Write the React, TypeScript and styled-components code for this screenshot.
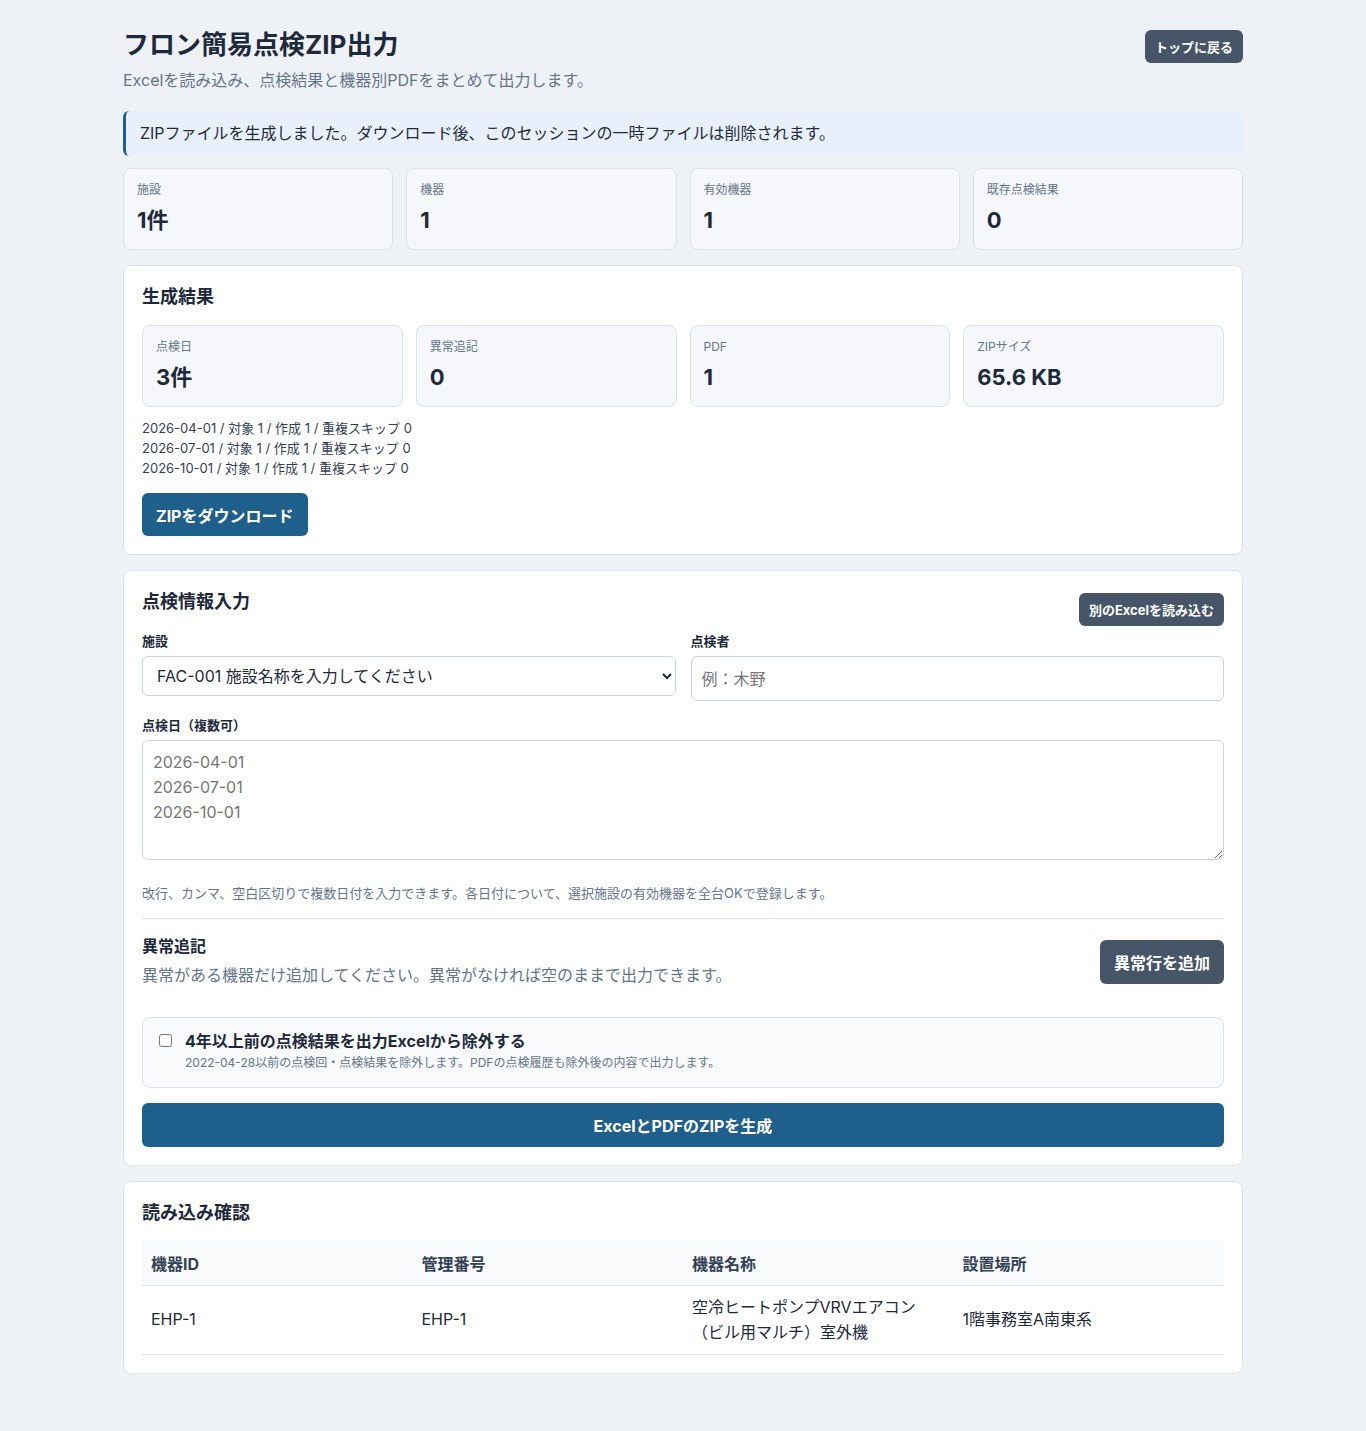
import React from "react";
import styled, { createGlobalStyle } from "styled-components";

const GlobalStyle = createGlobalStyle`
  html, body {
    margin: 0;
    padding: 0;
    background: #eef2f7;
  }
  body {
    font-family: "Inter", "Noto Sans CJK JP", sans-serif;
    color: #1e293b;
  }
  * {
    box-sizing: border-box;
  }
`;

const summary = [
  { label: "施設", value: "1件" },
  { label: "機器", value: "1" },
  { label: "有効機器", value: "1" },
  { label: "既存点検結果", value: "0" },
];

const results = [
  { label: "点検日", value: "3件" },
  { label: "異常追記", value: "0" },
  { label: "PDF", value: "1" },
  { label: "ZIPサイズ", value: "65.6 KB" },
];

const dateLogs = [
  "2026-04-01 / 対象 1 / 作成 1 / 重複スキップ 0",
  "2026-07-01 / 対象 1 / 作成 1 / 重複スキップ 0",
  "2026-10-01 / 対象 1 / 作成 1 / 重複スキップ 0",
];

const App = () => (
  <>
    <GlobalStyle />
    <Page>
      <Header>
        <div>
          <Title>フロン簡易点検ZIP出力</Title>
          <Subtitle>Excelを読み込み、点検結果と機器別PDFをまとめて出力します。</Subtitle>
        </div>
        <SmallButton>トップに戻る</SmallButton>
      </Header>

      <Notice>ZIPファイルを生成しました。ダウンロード後、このセッションの一時ファイルは削除されます。</Notice>

      <StatGrid>
        {summary.map((s) => (
          <StatCard key={s.label}>
            <StatLabel>{s.label}</StatLabel>
            <StatValue>{s.value}</StatValue>
          </StatCard>
        ))}
      </StatGrid>

      <Panel>
        <PanelTitle>生成結果</PanelTitle>
        <StatGrid>
          {results.map((s) => (
            <StatCard key={s.label}>
              <StatLabel>{s.label}</StatLabel>
              <StatValue>{s.value}</StatValue>
            </StatCard>
          ))}
        </StatGrid>
        <LogList>
          {dateLogs.map((l) => (
            <div key={l}>{l}</div>
          ))}
        </LogList>
        <PrimaryButton>ZIPをダウンロード</PrimaryButton>
      </Panel>

      <Panel>
        <PanelHead>
          <PanelTitle>点検情報入力</PanelTitle>
          <SmallButton>別のExcelを読み込む</SmallButton>
        </PanelHead>
        <FieldRow>
          <Field>
            <FieldLabel>施設</FieldLabel>
            <Select defaultValue="FAC-001">
              <option value="FAC-001">FAC-001 施設名称を入力してください</option>
            </Select>
          </Field>
          <Field>
            <FieldLabel>点検者</FieldLabel>
            <TextInput placeholder="例：木野" />
          </Field>
        </FieldRow>
        <Field>
          <FieldLabel>点検日（複数可）</FieldLabel>
          <TextArea placeholder={"2026-04-01\n2026-07-01\n2026-10-01"} />
        </Field>
        <Hint>改行、カンマ、空白区切りで複数日付を入力できます。各日付について、選択施設の有効機器を全台OKで登録します。</Hint>
        <Divider />
        <AnomalyHead>
          <div>
            <SectionTitle>異常追記</SectionTitle>
            <SectionNote>異常がある機器だけ追加してください。異常がなければ空のままで出力できます。</SectionNote>
          </div>
          <GrayButton>異常行を追加</GrayButton>
        </AnomalyHead>
        <CheckBox>
          <input type="checkbox" />
          <div>
            <CheckTitle>4年以上前の点検結果を出力Excelから除外する</CheckTitle>
            <CheckNote>2022-04-28以前の点検回・点検結果を除外します。PDFの点検履歴も除外後の内容で出力します。</CheckNote>
          </div>
        </CheckBox>
        <WideButton>ExcelとPDFのZIPを生成</WideButton>
      </Panel>

      <Panel>
        <PanelTitle>読み込み確認</PanelTitle>
        <Table>
          <thead>
            <tr>
              <Th>機器ID</Th>
              <Th>管理番号</Th>
              <Th>機器名称</Th>
              <Th>設置場所</Th>
            </tr>
          </thead>
          <tbody>
            <tr>
              <Td>EHP-1</Td>
              <Td>EHP-1</Td>
              <Td>
                空冷ヒートポンプVRVエアコン
                <br />
                （ビル用マルチ）室外機
              </Td>
              <Td>1階事務室A南東系</Td>
            </tr>
          </tbody>
        </Table>
      </Panel>
    </Page>
  </>
);

export default App;

const Page = styled.div`
  width: 1120px;
  margin: 0 auto;
  padding: 28px 0 58px;
  display: flex;
  flex-direction: column;
  gap: 15px;
`;

const Header = styled.header`
  display: flex;
  justify-content: space-between;
  align-items: flex-start;
  margin-bottom: 6px;
`;

const Title = styled.h1`
  margin: 0;
  font-size: 26px;
  line-height: 34px;
  font-weight: 700;
  color: #1e293b;
`;

const Subtitle = styled.p`
  margin: 7px 0 0;
  font-size: 16px;
  line-height: 22px;
  color: #64748b;
`;

const SmallButton = styled.button`
  font-family: inherit;
  font-size: 13px;
  font-weight: 700;
  color: #fff;
  background: #475569;
  border: none;
  border-radius: 6px;
  padding: 0 10px;
  height: 33px;
  margin-top: 2px;
  cursor: pointer;
`;

const Notice = styled.div`
  background: #e8f1fb;
  border-left: 3px solid #1f5f8b;
  border-radius: 6px;
  padding: 11px 14px;
  font-size: 16px;
  line-height: 23px;
  color: #1e293b;
  margin: -1px 0 -3px;
`;

const StatGrid = styled.div`
  display: grid;
  grid-template-columns: repeat(4, 1fr);
  gap: 13px;
`;

const StatCard = styled.div`
  background: #f5f7fb;
  border: 1px solid #dbe2ea;
  border-radius: 8px;
  height: 82px;
  padding: 13px 13px;
`;

const StatLabel = styled.div`
  font-size: 12px;
  line-height: 16px;
  color: #64748b;
`;

const StatValue = styled.div`
  margin-top: 7px;
  font-size: 22px;
  line-height: 30px;
  font-weight: 700;
  color: #1e293b;
`;

const Panel = styled.section`
  background: #fff;
  border: 1px solid #dbe2ea;
  border-radius: 8px;
  padding: 18px 18px;
  display: flex;
  flex-direction: column;
`;

const PanelHead = styled.div`
  display: flex;
  justify-content: space-between;
  align-items: flex-start;
  ${SmallButton} {
    margin-top: 4px;
  }
`;

const PanelTitle = styled.h2`
  margin: 0 0 15px;
  font-size: 18px;
  line-height: 26px;
  font-weight: 700;
  color: #1e293b;
`;

const LogList = styled.div`
  margin-top: 11px;
  font-size: 13px;
  line-height: 20px;
  color: #334155;
`;

const PrimaryButton = styled.button`
  align-self: flex-start;
  margin-top: 15px;
  height: 43px;
  padding: 0 14px;
  font-family: inherit;
  font-size: 16px;
  font-weight: 700;
  color: #fff;
  background: #1f5f8b;
  border: none;
  border-radius: 6px;
`;

const FieldRow = styled.div`
  display: grid;
  grid-template-columns: 1fr 1fr;
  gap: 15px;
  margin-top: 2px;
`;

const Field = styled.div`
  display: flex;
  flex-direction: column;
  margin-bottom: 15px;
`;

const FieldLabel = styled.label`
  font-size: 13px;
  line-height: 18px;
  font-weight: 700;
  color: #1e293b;
  margin-bottom: 6px;
`;

const fieldBase = `
  font-family: inherit;
  font-size: 16px;
  color: #1e293b;
  background: #fff;
  border: 1px solid #cbd5e1;
  border-radius: 6px;
`;

const Select = styled.select`
  ${fieldBase}
  height: 40px;
  padding: 0 10px;
`;

const TextInput = styled.input`
  ${fieldBase}
  height: 45px;
  padding: 0 10px;
  &::placeholder {
    color: #757575;
  }
`;

const TextArea = styled.textarea`
  ${fieldBase}
  height: 120px;
  padding: 9px 10px;
  line-height: 25px;
  resize: vertical;
  &::placeholder {
    color: #757575;
  }
`;

const Hint = styled.p`
  margin: 9px 0 16px;
  font-size: 13px;
  line-height: 18px;
  color: #64748b;
`;

const Divider = styled.hr`
  margin: 0 0 17px;
  border: none;
  border-top: 1px solid #dbe2ea;
`;

const AnomalyHead = styled.div`
  display: flex;
  justify-content: space-between;
  align-items: flex-start;
  margin-bottom: 31px;
`;

const SectionTitle = styled.h3`
  margin: 0;
  font-size: 16px;
  line-height: 20px;
  font-weight: 700;
  color: #1e293b;
`;

const SectionNote = styled.p`
  margin: 8px 0 0;
  font-size: 16px;
  line-height: 22px;
  color: #64748b;
`;

const GrayButton = styled.button`
  height: 44px;
  padding: 0 14px;
  font-family: inherit;
  font-size: 16px;
  font-weight: 700;
  color: #fff;
  background: #475569;
  border: none;
  border-radius: 6px;
  margin-top: 4px;
`;

const CheckBox = styled.label`
  display: flex;
  align-items: flex-start;
  gap: 13px;
  background: #f8fafc;
  border: 1px solid #dbe2ea;
  border-radius: 8px;
  padding: 12px 16px 16px;
  margin-bottom: 15px;
  input {
    margin: 4px 0 0;
    width: 13px;
    height: 13px;
  }
`;

const CheckTitle = styled.div`
  font-size: 16px;
  line-height: 22px;
  font-weight: 700;
  color: #1e293b;
`;

const CheckNote = styled.div`
  margin-top: 2px;
  font-size: 12px;
  line-height: 17px;
  color: #64748b;
`;

const WideButton = styled.button`
  height: 44px;
  font-family: inherit;
  font-size: 16px;
  font-weight: 700;
  color: #fff;
  background: #1f5f8b;
  border: none;
  border-radius: 6px;
`;

const Table = styled.table`
  width: 100%;
  border-collapse: collapse;
  table-layout: fixed;
`;

const Th = styled.th`
  text-align: left;
  background: #f8fafc;
  font-size: 16px;
  font-weight: 700;
  color: #334155;
  height: 44px;
  padding: 0 9px;
  border-bottom: 1px solid #dbe2ea;
`;

const Td = styled.td`
  font-size: 16px;
  line-height: 25px;
  color: #1e293b;
  padding: 9px 9px;
  height: 69px;
  border-bottom: 1px solid #dbe2ea;
  vertical-align: middle;
`;
